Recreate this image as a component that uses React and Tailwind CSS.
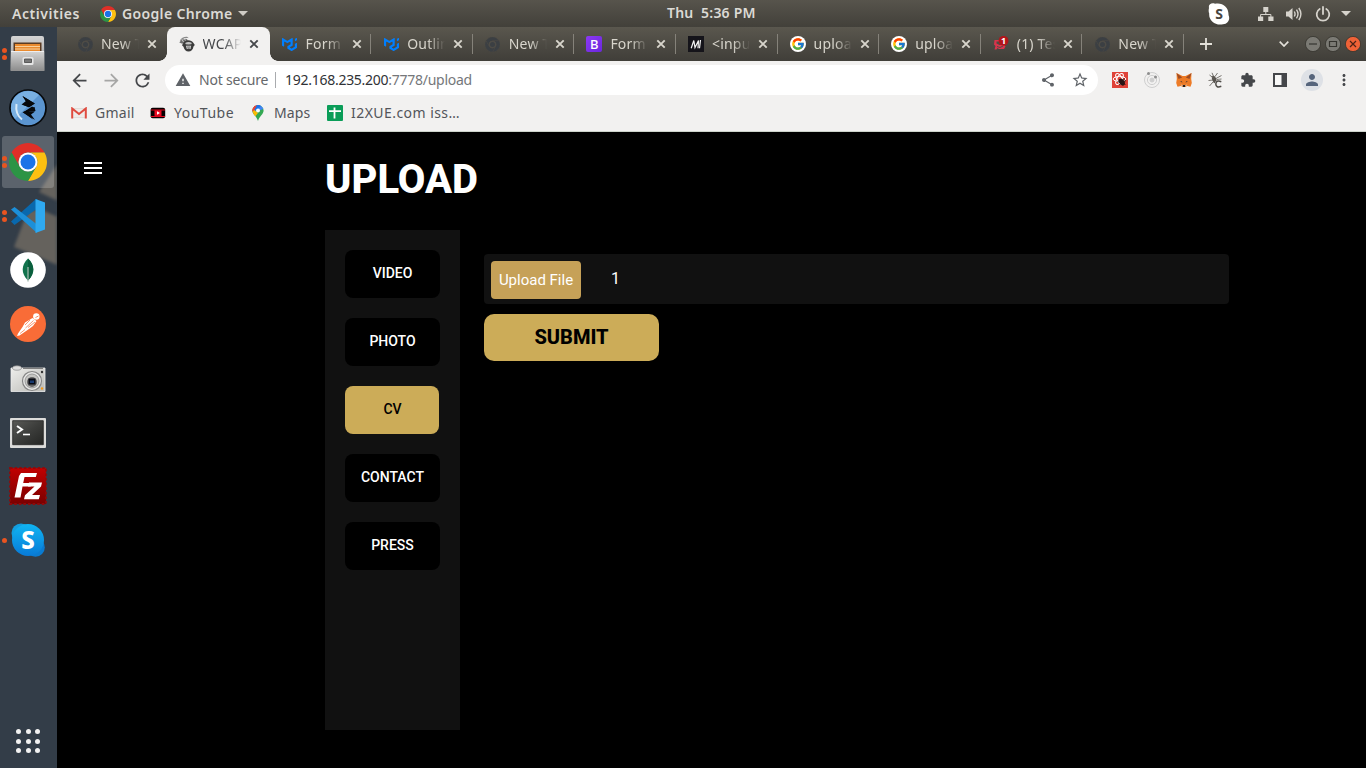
import React from "react";
import { FcGoogle } from "react-icons/fc";
import { SiMui } from "react-icons/si";
import {
  MdArrowBack,
  MdArrowForward,
  MdRefresh,
  MdWarning,
  MdShare,
  MdStarBorder,
  MdExtension,
  MdPerson,
  MdMoreVert,
  MdMenu,
} from "react-icons/md";

const SECTOR = "M3.22 12A24 24 0 0 1 44.78 12H24A12 12 0 0 0 13.61 30Z";

function Chrome({ className }) {
  return (
    <svg viewBox="0 0 48 48" className={className}>
      <path d={SECTOR} fill="#df2f27" />
      <path d={SECTOR} fill="#fdc011" transform="rotate(120 24 24)" />
      <path d={SECTOR} fill="#2c9445" transform="rotate(240 24 24)" />
      <circle cx="24" cy="24" r="12" fill="#fff" />
      <circle cx="24" cy="24" r="9.5" fill="#1a73e8" />
    </svg>
  );
}

function ChromeGrey() {
  return (
    <svg viewBox="0 0 48 48" className="size-[15px]">
      <g fill="#3b3f43" stroke="#4d4b45" strokeWidth="1.200">
        <path d={SECTOR} />
        <path d={SECTOR} transform="rotate(120 24 24)" />
        <path d={SECTOR} transform="rotate(240 24 24)" />
        <circle cx="24" cy="24" r="11" fill="#504e47" />
      </g>
      <circle cx="24" cy="24" r="8" fill="#3b3f43" />
    </svg>
  );
}

function Gorilla() {
  return (
    <svg viewBox="0 0 16 16" className="size-4">
      <path d="M.8 4.800C2 2 5 .6 8 .8l2 1.400C6.500 1.600 4 2.800 2.500 5Z" fill="#8a8a8a" />
      <path d="M.3 6.500C2 3.800 5 2.800 8 3.200l1 1.200L3.300 7.800Z" fill="#6c6c6c" />
      <path d="M5 2l1.500 2.500M3 3.500 4.500 6" stroke="#f2f1f0" strokeWidth=".7" />
      <path d="M4.300 7C5.500 3.500 12.500 3 14.300 6.800L15.800 9l-1.300 1.500C14 14 12 15.600 9.500 15.600S5.200 14 4.500 10.800L3 9.200Z" fill="#3c3c3c" />
      <path d="M6.200 7c2-1.200 4.800-1.200 6.600 0l-.5 1.300-2.800.3L6.700 8.300Z" fill="#c4c4c4" />
      <path d="M7 9.800h5.200l-.7 3.200H7.800Z" fill="#dcdcdc" />
      <path d="M8 11h3.300M8.500 12.300h2.300" stroke="#444" strokeWidth=".7" />
    </svg>
  );
}

function Mdn() {
  return (
    <svg viewBox="0 0 16 16" className="size-4">
      <path d="M0 0h16v16H0z" fill="#15141a" />
      <path d="M3.200 12.200 5.800 4.500 7 11.500 10.500 4.500 10 12.200M12.500 4 11.500 12.200" fill="none" stroke="#f2f2f2" strokeWidth="1.200" />
    </svg>
  );
}

function Badge() {
  return (
    <svg viewBox="0 0 16 16" className="size-4">
      <path d="M1.500 4h5v1.500h-3V7.500l3 1.500 4-1 2 2.500-1.500 2.500H6L4.500 12 3.500 13.500H1.500l1-3.500-1.500-1.500Z" fill="#d8344c" />
      <path d="M4 10.500l3 1 3-1.500" stroke="#514c46" fill="none" />
      <circle cx="10.500" cy="4.800" r="4.900" fill="#b3151a" />
      <text x="10.600" y="8" textAnchor="middle" fontSize="9" fontWeight="700" fill="#fff" fontFamily="Noto Sans, sans-serif">1</text>
    </svg>
  );
}

const tabs = [
  { title: "New Tab", icon: <ChromeGrey /> },
  { title: "WCAPP", icon: <Gorilla />, active: true },
  { title: "Form Control", icon: <SiMui className="size-[15px] text-[#007fff]" /> },
  { title: "Outlined", icon: <SiMui className="size-[15px] text-[#007fff]" /> },
  { title: "New Tab", icon: <ChromeGrey /> },
  {
    title: "Form c",
    icon: (
      <span className="flex size-4 items-center justify-center rounded-[2px] bg-linear-to-br from-[#8c38f5] to-[#6b27dc] text-[13px] leading-none font-medium text-white">B</span>
    ),
  },
  { title: "<input>", icon: <Mdn /> },
  { title: "upload", icon: <span className="flex size-4 items-center justify-center rounded-full bg-white"><FcGoogle className="size-[14px]" /></span> },
  { title: "upload", icon: <span className="flex size-4 items-center justify-center rounded-full bg-white"><FcGoogle className="size-[14px]" /></span> },
  { title: "(1) Test", icon: <Badge /> },
  { title: "New Tab", icon: <ChromeGrey /> },
];

function Tab({ title, icon, active, last }) {
  return (
    <div
      className={
        active
          ? "relative flex h-[34px] w-[103px] shrink-0 items-center rounded-t-lg bg-[#f2f1f0] pl-3 text-[#45474a]"
          : "flex h-[34px] w-[101.6px] shrink-0 items-center pl-3 text-[#d8d5cc]"
      }
    >
      {active && (
        <>
          <span className="absolute bottom-0 -left-2 size-2 bg-[radial-gradient(circle_at_0_0,transparent_7.5px,#f2f1f0_8px)]" />
          <span className="absolute -right-2 bottom-0 size-2 bg-[radial-gradient(circle_at_100%_0,transparent_7.5px,#f2f1f0_8px)]" />
        </>
      )}
      <span className="flex size-4 shrink-0 items-center justify-center">{icon}</span>
      <span className="ml-2 w-[38px] shrink-0 overflow-hidden text-[14px] leading-5 tracking-[0.2px] whitespace-nowrap [mask-image:linear-gradient(to_right,black_55%,transparent)]">
        {title}
      </span>
      <svg viewBox="0 0 10 10" className="ml-[8px] size-[10px] shrink-0">
        <path d="M1.300 1.300l7.400 7.400M8.700 1.300 1.300 8.700" stroke="currentColor" strokeWidth="1.900" />
      </svg>
      <span className="grow" />
      {!active && !last && <span className="h-5 w-px bg-[#85827a]" />}
    </div>
  );
}

function TopBar() {
  return (
    <div className="flex h-[27px] items-center bg-linear-to-b from-[#57544c] to-[#42403a] text-[14px] leading-none font-semibold text-[#dcdad5]">
      <span className="ml-3 w-[88px] tracking-[0.55px] whitespace-nowrap">Activities</span>
      <Chrome className="size-4" />
      <span className="ml-[6px] w-[111px] tracking-[0.35px] whitespace-nowrap">Google Chrome</span>
      <svg viewBox="0 0 10 5" className="ml-[5px] h-[5px] w-[10px]"><path d="M0 0h10L5 5Z" fill="#cfccc5" /></svg>
      <span className="ml-[419px] w-[89px] pb-[2px] tracking-[0.2px] whitespace-pre">Thu  5:36 PM</span>
      <span className="grow" />
      <svg viewBox="0 0 22 22" className="size-[22px]">
        <path d="M1 5C0 1 4-.5 7 .8 14-1 21 4 20.500 12c2 4-.5 9-5.500 9.200C8 23 .5 18 1.200 10.500.5 9 .5 7 1 5Z" fill="#fff" />
        <text x="11" y="16" textAnchor="middle" fontSize="14" fontWeight="700" fill="#47453f" fontFamily="Noto Sans, sans-serif">S</text>
      </svg>
      <svg viewBox="0 0 16 16" className="ml-[28px] size-4" fill="#d6d3cc">
        <path d="M5.300 1h5v5h-5zM0 10.500h5.200V15H0zM10.300 10.500h5.200V15h-5.200z" />
        <path d="M7.800 6v2.500M2.600 11V8.500h10.300V11" fill="none" stroke="#d6d3cc" />
      </svg>
      <svg viewBox="0 0 16 16" className="ml-3 size-4" fill="none" stroke="#d6d3cc" strokeWidth="1.400">
        <path d="M0 5.500h2.500L6.500 2v12L2.500 10.500H0Z" fill="#d6d3cc" stroke="none" />
        <path d="M8.300 5.500q1.500 2.500 0 5M10.500 3.700q3 4.300 0 8.600M12.800 2q4.200 6 0 12" />
      </svg>
      <svg viewBox="0 0 16 16" className="ml-[13px] size-4" fill="none" stroke="#d6d3cc" strokeWidth="1.800">
        <path d="M8 1v7M4.700 3a6.300 6.300 0 1 0 6.600 0" strokeLinecap="round" />
      </svg>
      <svg viewBox="0 0 10 5" className="mr-[15px] ml-[10px] h-[5px] w-[10px]"><path d="M0 0h10L5 5Z" fill="#d6d3cc" /></svg>
    </div>
  );
}

function Files() {
  return (
    <svg viewBox="0 0 36 36" className="size-9">
      <defs>
        <linearGradient id="fc" x1="0" y1="0" x2="0" y2="1"><stop offset="0" stopColor="#d4d4d4" /><stop offset="1" stopColor="#8f8f8f" /></linearGradient>
      </defs>
      <path d="M3 0h29q2 0 2 2l.5 33H.5L1 2q0-2 2-2Z" fill="url(#fc)" />
      <path d="M3.500 6.500h28V16h-28z" fill="#5b3b22" />
      <path d="M5 8h25v7H5z" fill="#e98a2e" />
      <path d="M5 10.500h25M5 13h25" stroke="#f7cf9b" />
      <path d="M1 15.500h33.200v18.500H.7z" fill="url(#fc)" />
      <path d="M1 15.500h33" stroke="#eee" />
      <rect x="12.500" y="21" width="11" height="8" rx="1.500" fill="#e5e5e5" />
      <path d="M14.500 23h7v3.500h-7z" fill="#777" stroke="#444" strokeWidth=".8" />
    </svg>
  );
}

function Zap() {
  return (
    <svg viewBox="0 0 38 38" className="size-[38px]">
      <circle cx="19" cy="19" r="18" fill="#5b95d0" stroke="#07090b" strokeWidth="1.700" />
      <path d="M19 2a17 17 0 0 0-13 28L30 6A17 17 0 0 0 19 2Z" fill="#79b0e2" />
      <path d="M7.500 15q-1.500 10 5.500 15.500" fill="none" stroke="#d9ebf8" strokeWidth="2" />
      <path d="M13.500 7 25.500 14.500 20 18.300 14.500 16l3-2.500ZM23 17.500 14 23.500 26 31 22 25.500 26 22.500 19.500 22.500 26 19Z" fill="#07090b" />
      <path d="M13.500 7 17 12 12.500 15.500 20 18.300 26 14.500ZM25.500 18 13.500 23.200 26.500 22Z" fill="#07090b" />
      <path d="M13.500 23 25.500 22.500 20.500 25.500 24 30.500Z" fill="#07090b" />
    </svg>
  );
}

function Code() {
  return (
    <svg viewBox="0 0 34 34" className="size-[34px]">
      <path d="M0 22.500 25 0l2 1v8L3.500 26Z" fill="#0968ad" />
      <path d="M0 10.500 3.500 8 26 25.500V34Z" fill="#1c8fd9" />
      <path d="M24.500 0 34 3.500v27L24.500 34Z" fill="#2fa9f0" />
    </svg>
  );
}

function Mongo() {
  return (
    <svg viewBox="0 0 36 36" className="mb-px size-9">
      <circle cx="18" cy="18" r="17.800" fill="#fff" />
      <path d="M18 6.500c7 6.500 7 15 .5 21.500h-1C11 21.500 11 13 18 6.500Z" fill="#11734c" />
      <path d="M18 6.500c7 6.500 7 15 .5 21.500H18Z" fill="#0a5f3d" />
      <path d="M18 15v14.500" stroke="#9fb7ab" strokeWidth="1.300" />
    </svg>
  );
}

function Postman() {
  return (
    <svg viewBox="0 0 36 36" className="mb-px size-9">
      <circle cx="18" cy="18" r="18" fill="#f96c37" />
      <circle cx="26.300" cy="10.500" r="3.200" fill="#fff" />
      <path d="M22.500 12 15 16.500 12.500 21 8 27.500 7 30l2.500-.5L19 23l4-3 3.500-5Z" fill="#fff" />
      <path d="M23.500 14.500 15.500 22M20 14l-5 5M25 16l-7 5.500M10 27.500l5-4" stroke="#f96c37" strokeWidth=".7" />
      <path d="M25.500 11.500l3-1.500" stroke="#f96c37" strokeWidth=".8" />
    </svg>
  );
}

function Camera() {
  return (
    <svg viewBox="0 0 36 28" className="mt-px h-7 w-9">
      <defs>
        <linearGradient id="cam" x1="0" y1="0" x2="1" y2="1"><stop offset="0" stopColor="#eeeeec" /><stop offset="1" stopColor="#b9b9b4" /></linearGradient>
      </defs>
      <path d="M1 3h34v23.500H1Z" fill="url(#cam)" stroke="#eee" strokeWidth=".8" />
      <path d="M13 3.300h20" stroke="#666" />
      <ellipse cx="7" cy="3" rx="4.500" ry="2.200" fill="#ddd" stroke="#888" strokeWidth=".7" />
      <circle cx="22" cy="16" r="9.500" fill="#e8e8e6" stroke="#858585" strokeWidth="1.200" />
      <circle cx="22" cy="16" r="7" fill="#c5c5c2" stroke="#999" />
      <circle cx="22" cy="17" r="5" fill="#656565" />
      <path d="M18.500 13.500h7v6h-7z" fill="#080b14" />
      <path d="M20 15.500h4v2.500h-4z" fill="#18396f" />
      <circle cx="32" cy="7" r="1.200" fill="#333" />
      <circle cx="32" cy="23.500" r="1.200" fill="#f39a1d" />
    </svg>
  );
}

function Terminal() {
  return (
    <svg viewBox="0 0 36 30" className="mt-[2px] h-[30px] w-9">
      <defs>
        <linearGradient id="term" x1="0" y1="0" x2="1" y2="1"><stop offset="0" stopColor="#5a5a57" /><stop offset=".5" stopColor="#3c3d3b" /><stop offset="1" stopColor="#242523" /></linearGradient>
      </defs>
      <rect width="36" height="30" rx="1" fill="#dcdcda" />
      <path d="M2.700 2.700h30.600v24H2.700z" fill="url(#term)" stroke="#222" strokeWidth=".8" />
      <path d="M7 8l5 3.500L7 15" fill="none" stroke="#fff" strokeWidth="2" />
      <path d="M13 16.500h7" stroke="#fff" strokeWidth="1.600" />
    </svg>
  );
}

function Zilla() {
  return (
    <svg viewBox="0 0 38 38" className="size-[38px]">
      <defs>
        <linearGradient id="fz" x1="0" y1="0" x2="0" y2="1"><stop offset="0" stopColor="#c10000" /><stop offset="1" stopColor="#7a0000" /></linearGradient>
      </defs>
      <path d="M1 1h36v36H1z" fill="url(#fz)" />
      <path d="M1 1h36v36H1z" fill="none" stroke="#8f0a0b" strokeWidth="1.800" strokeDasharray="2.600 2" />
      <path d="M12 6h16l-1.200 4H15.500l-1.300 6h8.500l-1 3.500h-8.200L11.500 30.500H5.500L10 9Z" fill="#fff" />
      <path d="M20 15.500h13l-1 4-9 8.500h8l-1.200 4.300H15l1-4 9.500-8.700H19Z" fill="#fff" />
    </svg>
  );
}

function Skype() {
  return (
    <svg viewBox="0 0 34 34" className="size-[34px]">
      <defs>
        <linearGradient id="sk" x1="0" y1="0" x2="0" y2="1"><stop offset="0" stopColor="#10b5f2" /><stop offset="1" stopColor="#087ad7" /></linearGradient>
      </defs>
      <circle cx="10" cy="10" r="9.500" fill="#129fe0" />
      <circle cx="24.500" cy="24.500" r="9.300" fill="#0a7bd1" />
      <circle cx="17" cy="17" r="16" fill="url(#sk)" />
      <text x="17" y="25.500" textAnchor="middle" fontSize="24" fontWeight="800" fill="#fff" fontFamily="Noto Sans, sans-serif">S</text>
    </svg>
  );
}

const dock = [
  { icon: <Files />, dots: 2 },
  { icon: <Zap />, dots: 0 },
  { icon: <Chrome className="size-[38px]" />, dots: 2, active: true },
  { icon: <Code />, dots: 2 },
  { icon: <Mongo />, dots: 0 },
  { icon: <Postman />, dots: 0 },
  { icon: <Camera />, dots: 0 },
  { icon: <Terminal />, dots: 0 },
  { icon: <Zilla />, dots: 0 },
  { icon: <Skype />, dots: 1 },
];

function Dock() {
  return (
    <aside className="relative flex w-[57px] shrink-0 flex-col overflow-hidden bg-[#333d48]">
      <svg viewBox="0 0 57 150" className="absolute top-[133px] left-0 h-[150px] w-[57px] blur-[1.5px]" fill="#65625d">
        <path d="M60 0 39 32 60 42ZM28 50 42 50 60 58V106L14 87Z" />
      </svg>
      {dock.map((d, i) => (
        <div key={i} className="relative flex h-[54px] shrink-0 items-center pl-[2px]">
          <span className="absolute left-[2px] flex w-[5px] flex-col gap-[2px]">
            {Array.from({ length: d.dots }, (_, k) => (
              <span key={k} className="size-[5px] rounded-full bg-[#e95420]" />
            ))}
          </span>
          <div className={d.active ? "flex h-[52px] w-[52px] items-center justify-center rounded-[3px] bg-white/20" : "flex h-[52px] w-[52px] items-center justify-center"}>
            {d.icon}
          </div>
        </div>
      ))}
      <div className="mt-auto mb-[15px] ml-4 grid w-6 grid-cols-3 gap-[4.5px]">
        {Array.from({ length: 9 }, (_, k) => (
          <span key={k} className="size-[5px] rounded-full bg-[#f2f2f2]" />
        ))}
      </div>
    </aside>
  );
}

function TabStrip() {
  return (
    <div className="flex h-[34px] items-center bg-linear-to-b from-[#5a574e] to-[#403e39] pl-2">
      {tabs.map((t, i) => (
        <Tab key={i} {...t} last={i === 0} />
      ))}
      <svg viewBox="0 0 12 12" className="ml-[16px] size-3 shrink-0"><path d="M6 0v12M0 6h12" stroke="#e4e1da" strokeWidth="1.800" /></svg>
      <span className="grow" />
      <svg viewBox="0 0 10 6" className="mr-[16px] h-[6px] w-[10px]"><path d="M.7.7 5 5 9.300.7" fill="none" stroke="#e4e1da" strokeWidth="1.700" /></svg>
      <div className="mr-[5px] flex gap-1">
        <svg viewBox="0 0 16 16" className="size-4"><circle cx="8" cy="8" r="7.600" fill="#7b7a74" stroke="#36352f" strokeWidth=".8" /><path d="M4 8h8" stroke="#35342f" strokeWidth="1.200" /></svg>
        <svg viewBox="0 0 16 16" className="size-4"><circle cx="8" cy="8" r="7.600" fill="#7b7a74" stroke="#36352f" strokeWidth=".8" /><path d="M4.500 5.500h7v5h-7z" fill="none" stroke="#35342f" strokeWidth="1.200" /></svg>
        <svg viewBox="0 0 16 16" className="size-4"><circle cx="8" cy="8" r="7.600" fill="#ef6237" stroke="#36352f" strokeWidth=".8" /><path d="M5 5l6 6M11 5l-6 6" stroke="#4b2216" strokeWidth="1.200" /></svg>
      </div>
    </div>
  );
}

function ReactBug() {
  return (
    <svg viewBox="0 0 16 16" className="size-4">
      <path d="M0 0h16v16H0z" fill="#df4238" />
      <g fill="none" stroke="#fff" strokeWidth="1">
        <ellipse cx="7.500" cy="7" rx="6.300" ry="2.500" />
        <ellipse cx="7.500" cy="7" rx="6" ry="2.500" transform="rotate(60 7.500 7)" />
        <ellipse cx="7.500" cy="7" rx="6" ry="2.500" transform="rotate(120 7.500 7)" />
      </g>
      <ellipse cx="9.800" cy="10" rx="2.600" ry="3.800" fill="#2a1515" transform="rotate(-35 9.800 10)" />
      <path d="M5.500 9.500l3 1M7 13l2.500-1.500M12 6v2.500M14 8.500l-2 1M11 14v-2M13.500 12.500l-2-.5" stroke="#2a1515" strokeWidth=".8" />
    </svg>
  );
}

function Orbit() {
  return (
    <svg viewBox="0 0 16 16" className="size-4" fill="none" stroke="#cfcfcf">
      <circle cx="8" cy="8" r="7.500" /><circle cx="8" cy="8" r="4.600" /><circle cx="8" cy="8" r="2" fill="#cfcfcf" />
      <circle cx="4.500" cy="1.500" r="1.500" fill="#8e8e8e" stroke="none" /><circle cx="11.500" cy="5" r="1.500" fill="#8e8e8e" stroke="none" />
    </svg>
  );
}

function Fox() {
  return (
    <svg viewBox="0 0 16 16" className="size-4">
      <path d="M.5 1 6.500 4h3l6-3-.3 6 .6 4-1.300 3.700-3.500-.8L9.300 15H6.700L5 13.900l-3.500.8L.2 11l.6-4Z" fill="#ed7b26" />
      <path d="M.5 1l5.700 4.500L2.500 7ZM15.500 1 9.800 5.500 13.500 7Z" fill="#9e4c24" />
      <path d="M4 9l2 .5.3 1.200ZM12 9l-2 .5-.3 1.200Z" fill="#2c2f38" />
      <path d="M6.500 13h3l-.5 2H7Z" fill="#25211f" />
      <path d="M4.500 12.500l2 .5v1.500Zm7 0-2 .5v1.500Z" fill="#ddd1c6" />
    </svg>
  );
}

function BugC() {
  return (
    <svg viewBox="0 0 16 16" className="size-4">
      <ellipse cx="6.300" cy="7.500" rx="2.100" ry="4" fill="#58544f" transform="rotate(-20 6.300 7.500)" />
      <path d="M1.500 3l4 3M.5 8.500 5 8M1.500 14l3.500-4M4 .8l1.500 3.500M9.500 1 7 4.500M13.500 3.500 8 6.500M13.500 7 9 7.500" stroke="#6a6661" strokeWidth=".9" />
      <circle cx="11" cy="12" r="4.300" fill="#f2f1f0" />
      <path d="M13.300 9.700q-5.300-2-5.500 2.300.2 4.300 5.500 2.300" fill="none" stroke="#4e4b47" strokeWidth="1.500" />
    </svg>
  );
}

function Toolbar() {
  return (
    <div className="flex h-[38px] items-center bg-[#f2f1f0] pl-[12px] text-[14px] text-[#45474a]">
      <MdArrowBack className="size-[21px] shrink-0 text-[#45474a]" />
      <MdArrowForward className="ml-[11px] size-[21px] shrink-0 text-[#a6a6a5]" />
      <MdRefresh className="ml-[10px] size-[21px] shrink-0 text-[#45474a]" />
      <div className="ml-3 flex h-[30px] w-[933px] shrink-0 items-center rounded-full bg-white pl-[10px]">
        <MdWarning className="size-4 text-[#5f6368]" />
        <span className="ml-2 w-[76px] pb-[2px] tracking-[-0.2px] whitespace-nowrap text-[#66686b]">Not secure</span>
        <span className="h-4 w-px bg-[#a9abae]" />
        <span className="ml-[9px] pb-[2px] tracking-[-0.27px] whitespace-nowrap text-[#303236]">192.168.235.200<span className="text-[#75777a]">:7778/upload</span></span>
        <span className="grow" />
        <MdShare className="size-4 text-[#5f6368]" />
        <MdStarBorder className="mr-[9px] ml-[15px] size-[18px] text-[#5f6368]" />
      </div>
      <div className="ml-[14px] flex items-center gap-4">
        <ReactBug />
        <Orbit />
        <Fox />
        <BugC />
        <MdExtension className="size-4 text-[#45474a]" />
        <svg viewBox="0 0 16 16" className="size-4"><path d="M1 1h14v14H1z" fill="#45474a" /><path d="M3 3h6.500v10H3z" fill="#f9f9f8" /></svg>
        <span className="-mx-[3px] flex size-[22px] items-center justify-center rounded-full bg-[#dee1e6]"><MdPerson className="size-[18px] text-[#56657c]" /></span>
        <MdMoreVert className="-ml-px size-[18px] text-[#45474a]" />
      </div>
    </div>
  );
}

function Bookmarks() {
  return (
    <div className="flex h-[33px] items-center border-b border-[#cdd3cb] bg-[#f2f1f0] pb-[4px] pl-[14px] text-[14px] text-[#53555a]">
      <svg viewBox="0 0 16 12" className="h-3 w-4">
        <path d="M1.500 1.500h13v9h-13z" fill="#eeebe9" stroke="#d9d2cd" strokeWidth=".6" />
        <path d="M1.200 11.500V1.500L8 7l6.800-5.500v10" fill="none" stroke="#df4b3f" strokeWidth="2" />
      </svg>
      <span className="ml-2 w-[55px] pb-[2px] tracking-[0.25px] whitespace-nowrap">Gmail</span>
      <svg viewBox="0 0 16 12" className="h-3 w-4">
        <rect x=".6" y=".8" width="14.600" height="10.400" rx="2" fill="#060000" />
        <path d="M1 3h14M1 9.500h14" stroke="#e0071c" strokeWidth="1.200" />
        <path d="M4.500 3.300h7v5.600h-7z" fill="#ef0b22" /><path d="M7 4.300 10 6 7 7.700Z" fill="#fff" />
      </svg>
      <span className="ml-2 w-[76px] pb-[2px] tracking-[0.5px] whitespace-nowrap">YouTube</span>
      <svg viewBox="0 0 16 16" className="size-4">
        <defs><clipPath id="pin"><path d="M8 0a5.600 5.600 0 0 1 5.600 5.600C13.600 9.500 9.500 11 8 16 6.500 11 2.400 9.500 2.400 5.600A5.600 5.600 0 0 1 8 0Z" /></clipPath></defs>
        <g clipPath="url(#pin)">
          <path d="M0 0h16v16H0z" fill="#34a853" /><path d="M0 0h8L3 6H0z" fill="#ea4335" /><path d="M6 0h10v3L8 6Z" fill="#4285f4" /><path d="M7 0h5L3 9 1 6Z" fill="#1a73e8" /><path d="M2 3l3 2.500L8 8l-4 5-3-5Z" fill="#fbbc04" /><path d="M2 2l5-2-3 5.500-2 1Z" fill="#ea4335" />
        </g>
        <circle cx="8" cy="5.600" r="2" fill="#fff" />
      </svg>
      <span className="ml-2 w-[53px] pb-[2px] tracking-[0.1px] whitespace-nowrap">Maps</span>
      <svg viewBox="0 0 16 16" className="size-4"><rect width="16" height="16" rx="1" fill="#0a9d58" /><path d="M7.500 2.500v11M2 6.200h12" stroke="#fff" strokeWidth="1.800" /></svg>
      <span className="ml-2 pb-[2px] tracking-[0.45px] whitespace-nowrap">I2XUE.com iss…</span>
    </div>
  );
}

const sections = ["VIDEO", "PHOTO", "CV", "CONTACT", "PRESS"];

function Page() {
  return (
    <main className="flex grow bg-black font-[Roboto,sans-serif] text-white">
      <div className="w-[268px] pt-6 pl-6"><MdMenu className="size-6" /></div>
      <div className="w-[904px]">
        <h1 className="h-[98px] pt-[18px] text-[40px] leading-[60px] font-extrabold">UPLOAD</h1>
        <div className="flex">
          <nav className="flex h-[500px] w-[135px] shrink-0 flex-col gap-5 bg-[#111111] p-5">
            {sections.map((s) => (
              <button
                key={s}
                className={
                  s === "CV"
                    ? "h-12 w-[94px] rounded-lg bg-[#ccac58] pb-[2px] pl-px text-[14px] font-medium text-black"
                    : "h-12 w-[95px] rounded-lg bg-black pb-[2px] text-[14px] font-medium"
                }
              >
                {s}
              </button>
            ))}
          </nav>
          <form className="ml-6 grow pt-6" onSubmit={(e) => e.preventDefault()}>
            <div className="flex h-[50px] items-center rounded bg-[#111111] pl-[7px]">
              <button type="button" className="mt-[2px] h-[38px] w-[90px] rounded bg-[#c6a158] text-[15px] whitespace-nowrap">Upload File</button>
              <span className="ml-[30px] text-base">1</span>
            </div>
            <button type="submit" className="mt-[10px] h-[47px] w-[175px] rounded-[10px] bg-[#ccac58] pb-[2px] text-[20px] font-extrabold text-black">SUBMIT</button>
          </form>
        </div>
      </div>
    </main>
  );
}

export default function App() {
  return (
    <div className="flex h-[768px] w-[1366px] flex-col overflow-hidden bg-black font-['Noto_Sans',sans-serif]">
      <TopBar />
      <div className="flex grow">
        <Dock />
        <div className="flex w-[1309px] flex-col">
          <TabStrip />
          <Toolbar />
          <Bookmarks />
          <Page />
        </div>
      </div>
    </div>
  );
}
